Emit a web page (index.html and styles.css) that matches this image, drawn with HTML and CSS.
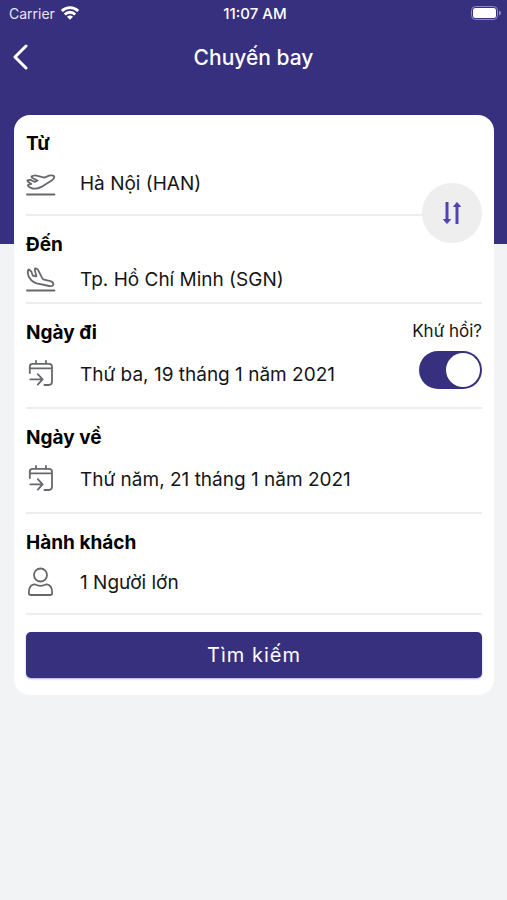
FILE: index.html
```html
<!DOCTYPE html>
<html lang="vi">
<head>
<meta charset="utf-8">
<meta name="viewport" content="width=device-width, initial-scale=1">
<title>Chuyến bay</title>
<link rel="stylesheet" href="styles.css">
</head>
<body>
<header class="hero">
  <div class="status">
    <div class="status-carrier">
      <span>Carrier</span>
      <svg width="18" height="14" viewBox="0 0 18 14" fill="none" stroke="#fff" stroke-width="2.8" aria-hidden="true">
        <path d="M0.8 5A11.5 11.5 0 0 1 17.2 5"/>
        <path d="M3.8 8.4A7.4 7.4 0 0 1 14.2 8.4"/>
        <path d="M9 13.8L6 10.8A4 4 0 0 1 12 10.8Z" fill="#fff" stroke="none"/>
      </svg>
    </div>
    <span class="status-time">11:07 AM</span>
    <svg class="status-battery" width="30" height="14" viewBox="0 0 30 14" fill="none" aria-hidden="true">
      <rect x="0.5" y="0.5" width="26" height="13" rx="4" stroke="#8f8bbd"/>
      <rect x="2" y="2" width="23" height="10" rx="2.5" fill="#fff"/>
      <path d="M28 4.5Q30 5.3 30 7Q30 8.7 28 9.5Z" fill="#8f8bbd"/>
    </svg>
  </div>
  <nav class="nav">
    <button class="back" type="button" aria-label="Quay lại">
      <svg width="16" height="26" viewBox="0 0 16 26" fill="none" stroke="currentColor" stroke-width="3" stroke-linecap="round" stroke-linejoin="round" aria-hidden="true"><path d="M14 2L3 13L14 24"/></svg>
    </button>
    <h1 class="title">Chuyến bay</h1>
  </nav>
</header>
<main>
  <form class="card">
    <section class="field">
      <h2 class="label" id="from">Từ</h2>
      <button class="value" type="button" aria-describedby="from">
        <svg class="icon" viewBox="0 0 30 30" aria-hidden="true">
          <path d="M2 13.7Q0.6 12.7 2.2 12.1L4.2 11.9Q5 11.9 5.8 12.5L8.8 13.9L11.6 12.5L6 9.7Q4.8 8.7 6.2 8.1L8.6 7.5Q9.4 7.3 10.4 7.7L18.4 9.7L23 7.7Q26.6 6.7 28 8.1Q29 9.7 26.4 11.9L15.4 18.9Q11 21.3 6.6 20.5Q3.4 19.9 2.2 18.1Q1.2 16.7 3.6 16.3L5.4 15.9Z"/>
          <path d="M1 26.5H28.5"/>
        </svg>
        <span>Hà Nội (HAN)</span>
      </button>
      <button class="swap" type="button" aria-label="Đổi chiều">
        <svg width="20" height="24" viewBox="0 0 20 24" fill="none" stroke="currentColor" stroke-width="3" aria-hidden="true">
          <path d="M5 1V19M15 23V5"/>
          <path d="M1.5 18.5H8.5L5 22.5ZM11.5 5.5H18.5L15 1.5Z" fill="currentColor" stroke-width="1" stroke-linejoin="round"/>
        </svg>
      </button>
    </section>
    <section class="field">
      <h2 class="label" id="to">Đến</h2>
      <button class="value value-compact" type="button" aria-describedby="to">
        <svg class="icon" viewBox="0 0 30 30" aria-hidden="true">
          <path d="M2 5.4Q2.2 3.8 3.6 5L5 6.2Q5.6 6.8 5.8 7.8L6.8 10.6L10.4 11.4L8.8 5Q8.6 2.8 10.4 3.6L12 4.8L16.2 13.2Q16.8 14.2 18 14.6L24.4 16.2Q27.6 17.4 27.4 19.6Q27 21.6 23.2 21L10.8 18.4Q7.4 17.6 5.2 15.2Q2 11.8 1.8 8.4Z"/>
          <path d="M1 25.5H28.5"/>
        </svg>
        <span>Tp. Hồ Chí Minh (SGN)</span>
      </button>
    </section>
    <section class="field field-split">
      <div class="field-main">
        <h2 class="label" id="depart">Ngày đi</h2>
        <button class="value value-tall" type="button" aria-describedby="depart">
          <svg class="icon" viewBox="0 0 30 30" aria-hidden="true">
            <path d="M3.8 14V7.6Q3.8 4.8 6.6 4.8H23Q26 4.8 26 7.6V22.8Q26 26 22.8 26H18.4M3.8 9.4H26M10 1.8V4.8M20 1.8V4.8M4.4 20.4H16.2M11.8 15.2L16.6 20.4L11.8 25.6"/>
          </svg>
          <span>Thứ ba, 19 tháng 1 năm 2021</span>
        </button>
      </div>
      <label class="return">
        <span>Khứ hồi?</span>
        <input class="switch" type="checkbox" role="switch" checked>
      </label>
    </section>
    <section class="field">
      <h2 class="label" id="return">Ngày về</h2>
      <button class="value value-tall" type="button" aria-describedby="return">
        <svg class="icon" viewBox="0 0 30 30" aria-hidden="true">
          <path d="M3.8 14V7.6Q3.8 4.8 6.6 4.8H23Q26 4.8 26 7.6V22.8Q26 26 22.8 26H18.4M3.8 9.4H26M10 1.8V4.8M20 1.8V4.8M4.4 20.4H16.2M11.8 15.2L16.6 20.4L11.8 25.6"/>
        </svg>
        <span>Thứ năm, 21 tháng 1 năm 2021</span>
      </button>
    </section>
    <section class="field">
      <h2 class="label" id="guests">Hành khách</h2>
      <button class="value" type="button" aria-describedby="guests">
        <svg class="icon" viewBox="0 0 30 30" aria-hidden="true">
          <circle cx="14.5" cy="8" r="6.5"/>
          <path d="M2.8 26Q2.8 18.8 7.2 17.6Q9 17.2 10.6 18Q14.5 19.8 18.4 18Q20 17.2 21.8 17.6Q26.2 18.8 26.2 26Q26.2 28 24.2 28H4.8Q2.8 28 2.8 26Z"/>
        </svg>
        <span>1 Người lớn</span>
      </button>
    </section>
    <button class="submit" type="submit">Tìm kiếm</button>
  </form>
</main>
</body>
</html>
```
FILE: styles.css
```css
:root {
  --brand: #37307f;
  --page: #f2f3f5;
  --line: #eeeeef;
}

* {
  box-sizing: border-box;
}

body {
  margin: 0;
  min-height: 100vh;
  background: var(--page);
  color: #151515;
  font-family: Inter, "Liberation Sans", sans-serif;
  font-size: 19px;
}

button {
  margin: 0;
  padding: 0;
  border: 0;
  background: none;
  color: inherit;
  font: inherit;
  cursor: pointer;
}

.hero {
  padding-bottom: 156px;
  background: var(--brand);
  color: #fff;
}

.status {
  display: grid;
  grid-template-columns: 1fr auto 1fr;
  align-items: center;
  height: 26px;
  padding: 0 6px 0 9px;
  font-size: 14px;
}

.status-carrier {
  display: flex;
  align-items: center;
  gap: 6px;
  color: #e6e5f3;
}

.status-time {
  font-size: 15px;
  font-weight: 500;
}

.status-battery {
  justify-self: end;
}

.nav {
  display: grid;
  grid-template-columns: 40px 1fr 40px;
  align-items: center;
  height: 62px;
  padding: 0 12px;
}

.back {
  display: flex;
  align-items: center;
  height: 40px;
}

.title {
  margin: 0;
  font-size: 21px;
  font-weight: 500;
  text-align: center;
}

.card {
  margin: -129px 13px 24px 14px;
  padding: 0 12px 17px;
  border-radius: 16px;
  background: #fff;
}

.field {
  position: relative;
  padding-top: 17px;
  border-bottom: 2px solid var(--line);
}

.field-split {
  display: flex;
  justify-content: space-between;
}

.field-main {
  flex: 1;
}

.label {
  margin: 0;
  color: #000;
  font-size: 19px;
  font-weight: 700;
  line-height: 24px;
}

.value {
  display: flex;
  align-items: center;
  gap: 24px;
  width: 100%;
  height: 58px;
  padding-bottom: 4px;
  text-align: left;
}

.value-compact {
  height: 45px;
  padding-bottom: 0;
}

.value-tall {
  height: 62px;
}

.icon {
  flex: none;
  width: 30px;
  height: 30px;
  fill: none;
  stroke: #66686b;
  stroke-width: 1.8;
  stroke-linecap: round;
  stroke-linejoin: round;
}

.swap {
  position: absolute;
  right: 0;
  bottom: -29px;
  z-index: 1;
  display: grid;
  place-items: center;
  width: 60px;
  height: 60px;
  border-radius: 50%;
  background: #eeeeef;
  color: #5142b5;
}

.return {
  display: flex;
  flex-direction: column;
  align-items: flex-end;
  gap: 10px;
  font-size: 17px;
  line-height: 20px;
}

.switch {
  appearance: none;
  display: flex;
  justify-content: flex-end;
  width: 63px;
  height: 38px;
  margin: 0;
  padding: 2px;
  border-radius: 19px;
  background: var(--brand);
}

.switch::before {
  content: "";
  width: 34px;
  height: 34px;
  border-radius: 50%;
  background: #fff;
}

.switch:not(:checked) {
  justify-content: flex-start;
  background: #c9c9ce;
}

.submit {
  display: block;
  width: 100%;
  height: 46px;
  margin-top: 17px;
  border-radius: 5px;
  background: var(--brand);
  box-shadow: 0 1px 2px #37307f66;
  color: #fff;
  font-size: 20px;
  font-weight: 400;
  letter-spacing: 1px;
}
```
